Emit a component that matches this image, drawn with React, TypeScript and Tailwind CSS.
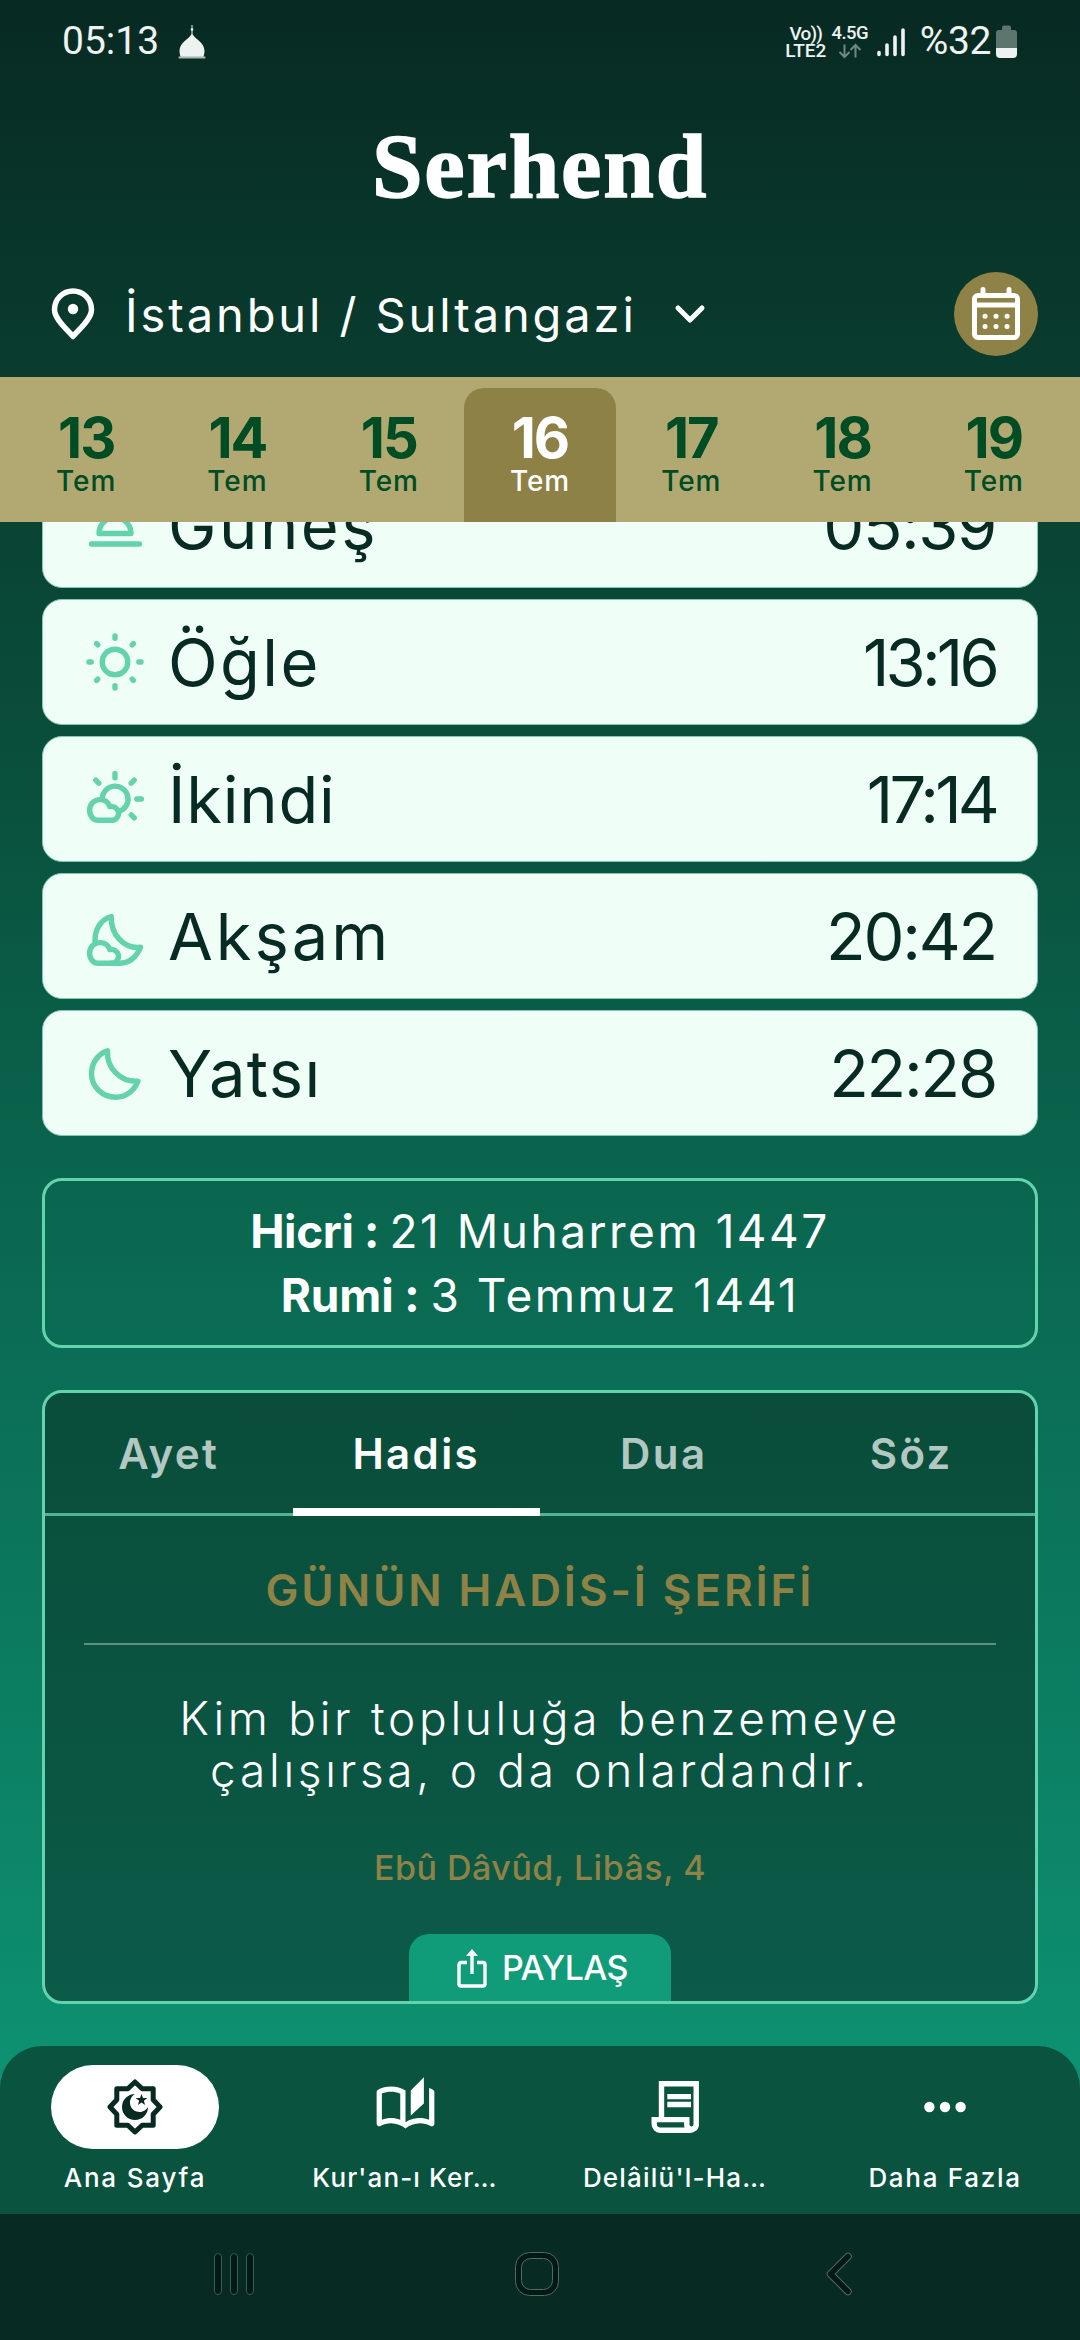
import React from 'react';
import { MdOutlineAutoStories } from 'react-icons/md';

const days = [13, 14, 15, 16, 17, 18, 19];
const activeDay = 16;

const CLOUD =
  'M13.5 51.3H27A7 7 0 0 0 33.4 43A7.2 7.2 0 0 0 24.8 37.6C23.2 33 19.4 30.6 15 30.6A10.4 10.4 0 0 0 4.6 41C4.6 47 8.3 51.3 13.5 51.3Z';

const iconProps = {
  viewBox: '0 0 60 60',
  className: 'w-[60px] h-[60px] shrink-0',
  fill: 'none',
  stroke: '#63d2ad',
  strokeWidth: 5.4,
  strokeLinecap: 'round' as const,
  strokeLinejoin: 'round' as const
};

const SunriseIcon = () => (
  <svg {...iconProps}>
    <path d="M14 38.5a16 16 0 0 1 32 0z" />
    <path d="M6.5 49H54.5" />
  </svg>
);

const SunIcon = () => (
  <svg {...iconProps}>
    <circle cx="30" cy="30" r="12.8" />
    <path d="M30 4v2.2M30 53.8v2.2M4 30h2.2M53.8 30h2.2M11.6 11.6l1.2 1.2M47.2 47.2l1.2 1.2M11.6 48.4l1.2-1.2M47.2 12.8l1.2-1.2" />
  </svg>
);

const CloudSunIcon = () => (
  <svg {...iconProps}>
    <path d="M17.3 29A12.9 12.9 0 1 1 34.5 42.2" />
    <path d="M30 4.5v4.2M51.8 30h4.6M46.2 14.2l3-3M13.8 14.2l-3-3M46.2 45.8l3 3" />
    <path d={CLOUD} />
  </svg>
);

const CloudMoonIcon = () => (
  <svg {...iconProps}>
    <path d="M10 36C9.5 23 16 13.5 26.3 10.5C25.5 28 38.5 43 55.5 41.3C51.5 51 44 57.3 34 57.3H27" />
    <path d={CLOUD} transform="translate(0 6)" />
  </svg>
);

const MoonIcon = () => (
  <svg {...iconProps}>
    <path d="M22.5 7.8C21.5 25 35.5 39.5 53 38.2C49 48 40.5 54.3 31 54.3C17 54.3 6.5 43.5 6.5 30.5C6.5 20 13 11 22.5 7.8Z" />
  </svg>
);

const prayers = [
  { name: 'Güneş', time: '05:39', Icon: SunriseIcon, spacing: 'tracking-[2.5px]', timeSpacing: 'tracking-[-1.4px]' },
  { name: 'Öğle', time: '13:16', Icon: SunIcon, spacing: 'tracking-[2.4px]', timeSpacing: 'tracking-[-3.8px]' },
  { name: 'İkindi', time: '17:14', Icon: CloudSunIcon, spacing: 'tracking-[0.8px]', timeSpacing: 'tracking-[-3.8px]' },
  { name: 'Akşam', time: '20:42', Icon: CloudMoonIcon, spacing: 'tracking-[3px]', timeSpacing: 'tracking-[-2.2px]' },
  { name: 'Yatsı', time: '22:28', Icon: MoonIcon, spacing: 'tracking-[1.4px]', timeSpacing: 'tracking-[-2.2px]' }
];

const tabs = ['Ayet', 'Hadis', 'Dua', 'Söz'];
const activeTab = 'Hadis';

const HomeIcon = () => (
  <svg viewBox="-28 -28 56 56" className="w-[56px] h-[56px]">
    <path
      d="M0 -25L7.2 -18.2H18.2V-7.2L25 0L18.2 7.2V18.2H7.2L0 25L-7.2 18.2H-18.2V7.2L-25 0L-18.2 -7.2V-18.2H-7.2Z"
      fill="none"
      stroke="#072a23"
      strokeWidth="5"
      strokeLinejoin="round"
    />
    <path d="M0 -13A13 13 0 1 0 13 0A9.6 9.6 0 1 1 0 -13Z" fill="#072a23" />
    <path d="M6.5 -13L8 -8.9H12.3L8.9 -6.3L10.1 -2.1L6.5 -4.6L2.9 -2.1L4.1 -6.3L.7 -8.9H5Z" fill="#072a23" />
  </svg>
);

const ScrollIcon = () => (
  <svg viewBox="0 0 60 60" className="w-[60px] h-[60px]" fill="none" stroke="white" strokeWidth="5.4">
    <path d="M16.5 42V6.7H51.2V48.4a4.8 4.8 0 0 1-9.4 0V42.6H9.2V47a6.2 6.2 0 0 0 6 6.2H45a6.2 6.2 0 0 0 6.2-6.200" />
    <path d="M22.3 19.6H46M22.3 27.5H46" />
  </svg>
);

const DotsIcon = () => (
  <svg viewBox="0 0 60 60" className="w-[60px] h-[60px]" fill="white">
    <circle cx="14.4" cy="30" r="5.2" />
    <circle cx="30" cy="30" r="5.2" />
    <circle cx="45.6" cy="30" r="5.2" />
  </svg>
);

const navItems = [
  { label: 'Ana Sayfa', icon: <HomeIcon />, active: true, spacing: 'tracking-[1.8px]' },
  { label: "Kur'an-ı Ker…", icon: <MdOutlineAutoStories className="w-[63px] h-[63px]" />, spacing: 'tracking-[1.1px]' },
  { label: "Delâilü'l-Ha…", icon: <ScrollIcon />, spacing: 'tracking-[1.2px]' },
  { label: 'Daha Fazla', icon: <DotsIcon />, spacing: 'tracking-[1.7px]' }
];

const StatusBar = () => (
  <div className="h-[83px] pl-[62px] pr-[63px] flex items-center justify-between text-[#eef2f0] font-[Roboto,sans-serif]">
    <div className="flex items-center gap-[19px]">
      <span className="text-[39px] leading-none">05:13</span>
      {/* mosque dome with its finial */}
      <svg viewBox="0 0 28 34" className="w-[28px] h-[34px]" fill="#eef2f0">
        <path d="M13.5 0h1v9c2 5 12 8 12 17 0 2-.5 3.5-1 5.800H2.500C2 29.500 1.500 28 1.500 26 1.500 17 11.500 14 13.500 9z" />
        <circle cx="14" cy="4.500" r="1.300" />
        <path d="M.6 31.500h26.800v2H.6z" opacity=".7" />
      </svg>
    </div>
    <div className="flex items-center">
      <div className="w-[40px] flex flex-col items-center text-[19px] font-medium leading-[17px]">
        <span className="tracking-[-.8px]">Vo))</span>
        <span>LTE2</span>
      </div>
      <div className="ml-[6px] w-[36px] flex flex-col items-center text-[18.500px] font-medium leading-[17px]">
        <span className="tracking-[-.6px]">4.5G</span>
        <svg viewBox="0 0 24 17" className="w-[24px] h-[17px]" fill="none" stroke="#6f8881" strokeWidth="2">
          <path d="M6.500 2.500v12M1.500 10l5 5 5-5M17.500 15.500v-12M12.500 8l5-5 5 5" />
        </svg>
      </div>
      <svg viewBox="0 0 30 32" className="ml-[8px] w-[30px] h-[32px]" stroke="#eef2f0" strokeWidth="3.600" strokeLinecap="round">
        <path d="M3 26.500v2M11 19v9.500M19 11v17.500M27 4v24.500" />
      </svg>
      <span className="ml-[14px] text-[39px] leading-none tracking-[-.4px]">%32</span>
      <svg viewBox="0 0 21 33" className="ml-[5px] w-[21px] h-[33px]">
        <path d="M6 2.500a2 2 0 0 1 2-2h5a2 2 0 0 1 2 2v2.500h3a3 3 0 0 1 3 3V23H0V8a3 3 0 0 1 3-3h3z" fill="#5c766f" />
        <path d="M0 23h21v6a4 4 0 0 1-4 4H4a4 4 0 0 1-4-4z" fill="#eef2f0" />
      </svg>
    </div>
  </div>
);

const LocationRow = () => (
  <div className="h-[84px] mt-[60px] pl-[50px] pr-[42px] flex items-center text-white">
    <svg viewBox="0 0 46 54" className="w-[46px] h-[54px]" fill="none" stroke="white" strokeWidth="5.500" strokeLinejoin="round">
      <path d="M23 49.500C19 44 4.500 33 4.500 22.500a18.500 18.500 0 0 1 37 0C41.500 33 27 44 23 49.500z" />
      <circle cx="23" cy="22" r="5.200" fill="white" stroke="none" />
    </svg>
    <span className="ml-[29px] text-[47px] leading-none tracking-[2.900px] whitespace-nowrap">İstanbul / Sultangazi</span>
    <svg viewBox="0 0 34 22" className="ml-[36px] w-[34px] h-[22px]" fill="none" stroke="white" strokeWidth="5" strokeLinecap="round" strokeLinejoin="round">
      <path d="M5 5l12 12L29 5" />
    </svg>
    <div className="ml-auto w-[84px] h-[84px] rounded-full bg-[#8f8246] flex items-center justify-center">
      <svg viewBox="0 0 50 54" className="w-[50px] h-[54px]" fill="none" stroke="white" strokeWidth="5">
        <rect x="3.500" y="8.500" width="43" height="42" rx="3.500" />
        <path d="M3.500 18H46.500" />
        <path d="M12 2.500v6M38 2.500v6" strokeLinecap="round" />
        <path d="M14 29.300h.1M25 29.300h.1M36 29.300h.1M14 39.500h.1M25 39.500h.1M36 39.500h.1" strokeLinecap="round" />
      </svg>
    </div>
  </div>
);

const DateBar = () => (
  <div className="mt-[21px] h-[145px] bg-[#b2a972] px-[10.500px] pt-[11px] flex">
    {days.map((day) => (
      <div
        key={day}
        className={
          day === activeDay
            ? 'flex-1 rounded-t-[20px] bg-[#8d8145] text-white flex flex-col items-center pt-[21px]'
            : 'flex-1 text-[#004c24] flex flex-col items-center pt-[21px]'
        }
      >
        <span className="text-[56px] leading-[58px] font-bold tracking-[-2px]">{day}</span>
        <span className="-mt-px text-[28px] leading-[30px] font-medium tracking-[.9px]">Tem</span>
      </div>
    ))}
  </div>
);

const PrayerList = () => (
  <div className="-mt-[60px] flex flex-col gap-[11px]">
    {prayers.map(({ name, time, Icon, spacing, timeSpacing }) => (
      <div
        key={name}
        className="h-[126px] rounded-[20px] border border-[#7fcbac] bg-[#effff8] pl-[42px] pr-[41px] flex items-center text-[#072a23] text-[65px] leading-none"
      >
        <Icon />
        <span className={`ml-[23px] ${spacing}`}>{name}</span>
        <span className={`ml-auto ${timeSpacing}`}>{time}</span>
      </div>
    ))}
  </div>
);

const CalendarInfo = () => (
  <div className="mt-[42px] h-[170px] rounded-[20px] border-[3px] border-[#63d2ad] flex flex-col justify-center text-center text-white text-[46px] leading-[64px] tracking-[2.500px]">
    <p>
      <span className="font-bold tracking-[-.400px]">Hicri : </span>21 Muharrem 1447
    </p>
    <p>
      <span className="font-bold tracking-[-.100px]">Rumi : </span>3 Temmuz 1441
    </p>
  </div>
);

const DailyCard = () => (
  <div className="mt-[42px] h-[614px] rounded-[20px] border-[3px] border-[#63d2ad] bg-linear-to-b from-[#094d3a] to-[#0b5b48] flex flex-col items-center overflow-hidden">
    <div className="w-full h-[123px] shrink-0 border-b-[3px] border-[#4fb592] flex">
      {tabs.map((tab) => (
        <div
          key={tab}
          className={
            tab === activeTab
              ? 'flex-1 h-[123px] border-b-8 border-white pt-[6px] flex items-center justify-center text-[42px] font-semibold tracking-[2.400px] text-white'
              : 'flex-1 h-[121px] flex items-center justify-center text-[42px] font-semibold tracking-[2.400px] text-white/70'
          }
        >
          {tab}
        </div>
      ))}
    </div>
    <h2 className="mt-[46px] text-[44px] leading-[56px] font-semibold tracking-[2.900px] text-[#8f8246]">GÜNÜN HADİS-İ ŞERİFİ</h2>
    <div className="mt-[25px] w-[912px] h-[2px] bg-[#5d927f]" />
    <p className="mt-[47px] text-[46px] leading-[52px] font-light tracking-[3.700px] text-center text-white">
      Kim bir topluluğa benzemeye
      <br />
      çalışırsa, o da onlardandır.
    </p>
    <p className="mt-[50px] text-[34px] leading-[44px] font-medium tracking-[.5px] text-[#8f8246]">Ebû Dâvûd, Libâs, 4</p>
    <div className="mt-auto w-[262px] h-[67px] rounded-t-[20px] bg-[#109b79] pl-[5px] flex items-center justify-center text-white">
      <svg viewBox="0 0 30 40" className="w-[30px] h-[40px]" fill="none" stroke="white" strokeWidth="3.400" strokeLinejoin="round">
        <path d="M10 14.500H4a2 2 0 0 0-2 2V36a2 2 0 0 0 2 2H26a2 2 0 0 0 2-2V16.500a2 2 0 0 0-2-2H20" />
        <path d="M15 26V6" />
        <path d="M15 1L21 8H9z" fill="white" stroke="none" />
      </svg>
      <span className="ml-[15px] text-[34px] leading-none font-medium tracking-[-.600px]">PAYLAŞ</span>
    </div>
  </div>
);

const BottomNav = () => (
  <div className="h-[168px] rounded-t-[42px] bg-[#09533f] flex text-white">
    {navItems.map((item) => (
      <div key={item.label} className="flex-1 pt-[19px] flex flex-col items-center">
        <div
          className={
            item.active
              ? 'w-[168px] h-[84px] rounded-full bg-white flex items-center justify-center'
              : 'w-[168px] h-[84px] flex items-center justify-center'
          }
        >
          {item.icon}
        </div>
        <span className={`mt-[12px] text-[26px] leading-[34px] font-medium whitespace-nowrap ${item.spacing}`}>{item.label}</span>
      </div>
    ))}
  </div>
);

const SystemNav = () => (
  <div className="h-[126px] bg-[#072a23] pb-[6px] pl-[212px] pr-[226px] flex items-center justify-between">
    <svg viewBox="0 0 44 46" className="w-[44px] h-[46px]" fill="#031a14" stroke="#3f5a52">
      <rect x="2.500" y="2.500" width="7" height="41" rx="3.500" />
      <rect x="18.500" y="2.500" width="7" height="41" rx="3.500" />
      <rect x="34.500" y="2.500" width="7" height="41" rx="3.500" />
    </svg>
    <svg viewBox="0 0 46 46" className="mr-[7px] w-[46px] h-[46px]" stroke="#4f6b62">
      <rect x="1.500" y="1.500" width="43" height="43" rx="14" fill="#031a14" />
      <rect x="7.500" y="7.500" width="31" height="31" rx="9" fill="#072a23" />
    </svg>
    <svg viewBox="0 0 30 46" className="w-[30px] h-[46px]" fill="none" strokeLinecap="round" strokeLinejoin="round">
      <path d="M24 5.500L6.500 23L24 40.500" stroke="#4f6b62" strokeWidth="7.500" />
      <path d="M24 5.500L6.500 23L24 40.500" stroke="#031a14" strokeWidth="5.500" />
    </svg>
  </div>
);

const App: React.FC = () => {
  return (
    <div className="w-[1080px] h-[2340px] flex flex-col overflow-hidden font-[Inter,sans-serif] bg-[linear-gradient(180deg,#072a23_0px,#093c2f_377px,#094e3b_740px,#0a644d_1150px,#0b765c_1550px,#0d9171_2060px,#0d9171_2340px)]">
      <StatusBar />
      <h1 className="mt-[39px] h-[90px] text-center font-['Liberation_Serif',serif] font-bold text-[91px] leading-[90px] tracking-[1.800px] text-white [-webkit-text-stroke:1.5px_white]">
        Serhend
      </h1>
      <LocationRow />
      <DateBar />
      <main className="h-[1524px] px-[42px] overflow-hidden">
        <PrayerList />
        <CalendarInfo />
        <DailyCard />
      </main>
      <BottomNav />
      <SystemNav />
    </div>
  );
};

export default App;
